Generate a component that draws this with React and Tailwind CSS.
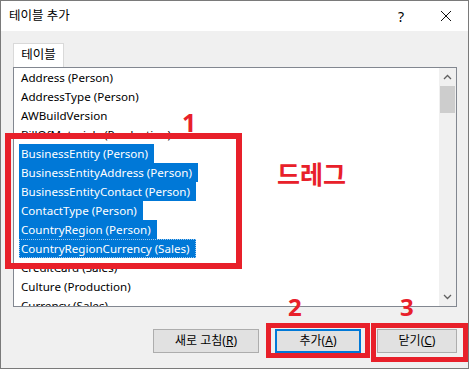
import React from 'react';

const rows = [
  { name: 'Address (Person)' },
  { name: 'AddressType (Person)' },
  { name: 'AWBuildVersion' },
  { name: 'BillOfMaterials (Production)' },
  { name: 'BusinessEntity (Person)', selected: true },
  { name: 'BusinessEntityAddress (Person)', selected: true },
  { name: 'BusinessEntityContact (Person)', selected: true },
  { name: 'ContactType (Person)', selected: true },
  { name: 'CountryRegion (Person)', selected: true },
  { name: 'CountryRegionCurrency (Sales)', selected: true, focused: true },
  { name: 'CreditCard (Sales)' },
  { name: 'Culture (Production)' },
  { name: 'Currency (Sales)' },
];

const font = { fontFamily: '"Noto Sans", "Noto Sans CJK KR", sans-serif' };

const Button = ({ label, hot, primary, width }) => (
  <button
    className={`h-[24px] ${width} flex items-center justify-center text-[12px] text-black bg-[#e1e1e1] ${
      primary ? 'border-2 border-[#0078d7]' : 'border border-[#adadad]'
    }`}
  >
    {label}(<span className="underline">{hot}</span>)
  </button>
);

export default function App() {
  return (
    <div
      className="relative w-[469px] h-[369px] bg-[#f0f0f0] border border-[#7a7a7a] flex flex-col overflow-hidden"
      style={font}
    >
      {/* title bar */}
      <div className="h-[30px] bg-white flex items-center pl-[8px] pr-[14px] shrink-0">
        <span className="text-[12.5px] text-black">테이블 추가</span>
        <span className="ml-auto text-[14px] text-black mr-[36px]">?</span>
        <svg width="12" height="12" viewBox="0 0 12 12" className="mr-[2px]">
          <path d="M1 1L11 11M11 1L1 11" stroke="#111" strokeWidth="1" />
        </svg>
      </div>

      {/* tab */}
      <div className="pl-[12px] pt-[12px] flex">
        <div className="h-[24px] w-[51px] bg-white border border-b-0 border-[#d9d9d9] flex items-center justify-center text-[12.5px] text-black">
          테이블
        </div>
      </div>

      {/* list box */}
      <div className="ml-[12px] w-[444px] h-[240px] bg-white border border-[#828790] flex overflow-hidden">
        <div className="flex-1 pl-[5px] overflow-hidden">
          {rows.map((r) => (
            <div key={r.name} className="h-[19px] flex items-center">
              <span
                className={`h-[19px] leading-[19px] pl-[2px] pr-[6px] text-[11.6px] whitespace-nowrap ${
                  r.selected ? 'bg-[#0078d7] text-white' : 'text-black'
                } ${r.focused ? 'outline-1 outline-dotted outline-[#9bc8ef] -outline-offset-1' : ''}`}
              >
                {r.name}
              </span>
            </div>
          ))}
        </div>
        <div className="w-[17px] bg-[#f0f0f0] flex flex-col items-center shrink-0">
          <div className="h-[18px] flex items-center justify-center">
            <svg width="9" height="6" viewBox="0 0 9 6">
              <path d="M1 5L4.5 1.5L8 5" stroke="#606060" strokeWidth="1.3" fill="none" />
            </svg>
          </div>
          <div className="w-[15px] h-[27px] bg-[#cdcdcd]" />
          <div className="mt-auto h-[18px] flex items-center justify-center">
            <svg width="9" height="6" viewBox="0 0 9 6">
              <path d="M1 1L4.5 4.5L8 1" stroke="#606060" strokeWidth="1.3" fill="none" />
            </svg>
          </div>
        </div>
      </div>

      {/* buttons */}
      <div className="mt-[22px] flex justify-end pr-[11px] gap-[16px]">
        <Button label="새로 고침" hot="R" width="w-[106px]" />
        <Button label="추가" hot="A" width="w-[86px]" primary />
        <Button label="닫기" hot="C" width="w-[80px]" />
      </div>

      {/* annotations */}
      <div className="absolute left-[4px] top-[132px] w-[237px] h-[136px] border-[6px] border-[#e8202a]" />
      <div className="absolute left-[265px] top-[322px] w-[104px] h-[35px] border-[5px] border-[#e8202a]" />
      <div className="absolute left-[370px] top-[322px] w-[97px] h-[39px] border-[5px] border-[#e8202a]" />
      <span className="absolute left-[181px] top-[106px] text-[25px] font-bold leading-[30px] text-[#e8202a]">1</span>
      <span className="absolute left-[287px] top-[291px] text-[24px] font-bold leading-[30px] text-[#e8202a]">2</span>
      <span className="absolute left-[399px] top-[291px] text-[24px] font-bold leading-[30px] text-[#e8202a]">3</span>
      <span
        className="absolute left-[276px] top-[155px] text-[25px] font-bold leading-[34px] text-[#e8202a]"
        style={{ fontFamily: '"Noto Sans CJK KR", sans-serif' }}
      >
        드레그
      </span>
    </div>
  );
}
